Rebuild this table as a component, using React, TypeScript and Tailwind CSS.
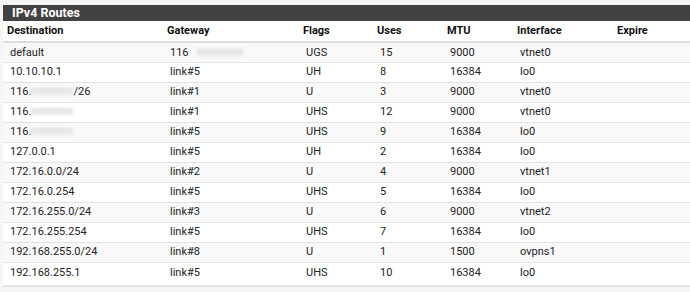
const routes = [
  { dest: "default", gw: "116", gwBlur: true, flags: "UGS", uses: "15", mtu: "9000", iface: "vtnet0" },
  { dest: "10.10.10.1", gw: "link#5", flags: "UH", uses: "8", mtu: "16384", iface: "lo0" },
  { dest: "116.", destBlur: "/26", gw: "link#1", flags: "U", uses: "3", mtu: "9000", iface: "vtnet0" },
  { dest: "116.", destBlur: "", gw: "link#1", flags: "UHS", uses: "12", mtu: "9000", iface: "vtnet0" },
  { dest: "116.", destBlur: "", gw: "link#5", flags: "UHS", uses: "9", mtu: "16384", iface: "lo0" },
  { dest: "127.0.0.1", gw: "link#5", flags: "UH", uses: "2", mtu: "16384", iface: "lo0" },
  { dest: "172.16.0.0/24", gw: "link#2", flags: "U", uses: "4", mtu: "9000", iface: "vtnet1" },
  { dest: "172.16.0.254", gw: "link#5", flags: "UHS", uses: "5", mtu: "16384", iface: "lo0" },
  { dest: "172.16.255.0/24", gw: "link#3", flags: "U", uses: "6", mtu: "9000", iface: "vtnet2" },
  { dest: "172.16.255.254", gw: "link#5", flags: "UHS", uses: "7", mtu: "16384", iface: "lo0" },
  { dest: "192.168.255.0/24", gw: "link#8", flags: "U", uses: "1", mtu: "1500", iface: "ovpns1" },
  { dest: "192.168.255.1", gw: "link#5", flags: "UHS", uses: "10", mtu: "16384", iface: "lo0" },
];

type Route = (typeof routes)[number] & { destBlur?: string; gwBlur?: boolean };

// redacted address parts in the screenshot
const Smudge = ({ w }: { w: string }) => (
  <span className={`inline-block h-[8px] ${w} bg-gradient-to-b from-[#d8d8d8] to-[#f0f0f0] blur-[1.5px] opacity-80 align-middle`} />
);

const App = () => {
  return (
    <div className="w-[690px] h-[292px] bg-[#f5f5f5] pt-[5px] font-['Roboto',sans-serif] overflow-hidden">
      <div className="ml-[3px] bg-white border-b-[2px] border-[#e4e4e4] pb-[3px]">
        <div className="h-[16px] bg-[#424242] text-white font-bold text-[12.5px] leading-[16px] pl-[9px]">
          IPv4 Routes
        </div>
        <table className="w-full table-fixed border-collapse text-[11px] text-[#222]">
          <colgroup>
            <col className="w-[160px]" />
            <col className="w-[136px]" />
            <col className="w-[74px]" />
            <col className="w-[70px]" />
            <col className="w-[70px]" />
            <col className="w-[100px]" />
            <col />
          </colgroup>
          <thead>
            <tr className="border-b-[2px] border-[#dddddd] text-left font-bold text-[#111]">
              <th className="pl-[4px] h-[21px] pt-[1px] align-middle">Destination</th>
              <th className="pl-[4px] pt-[1px]">Gateway</th>
              <th className="pl-[4px] pt-[1px]">Flags</th>
              <th className="pl-[4px] pt-[1px]">Uses</th>
              <th className="pl-[4px] pt-[1px]">MTU</th>
              <th className="pl-[4px] pt-[1px]">Interface</th>
              <th className="pl-[4px] pt-[1px]">Expire</th>
            </tr>
          </thead>
          <tbody>
            {(routes as Route[]).map((r, i) => (
              <tr
                key={i}
                className={`border-t border-[#e2e2e2] ${i % 2 === 0 ? "bg-[#f9f9f9]" : "bg-white"}`}
              >
                <td className="pl-[7px] h-[20px] pt-[1px]">
                  {r.dest}
                  {r.destBlur !== undefined && (
                    <>
                      <Smudge w="w-[42px]" />
                      {r.destBlur}
                    </>
                  )}
                </td>
                <td className="pl-[7px] pt-[1px]">
                  {r.gw}
                  {r.gwBlur && (
                    <span className="ml-[8px]">
                      <Smudge w="w-[46px]" />
                    </span>
                  )}
                </td>
                <td className="pl-[7px] pt-[1px]">{r.flags}</td>
                <td className="pl-[7px] pt-[1px]">{r.uses}</td>
                <td className="pl-[7px] pt-[1px]">{r.mtu}</td>
                <td className="pl-[7px] pt-[1px]">{r.iface}</td>
                <td className="pl-[7px] pt-[1px]"></td>
              </tr>
            ))}
          </tbody>
        </table>
      </div>
    </div>
  );
};

export default App;
